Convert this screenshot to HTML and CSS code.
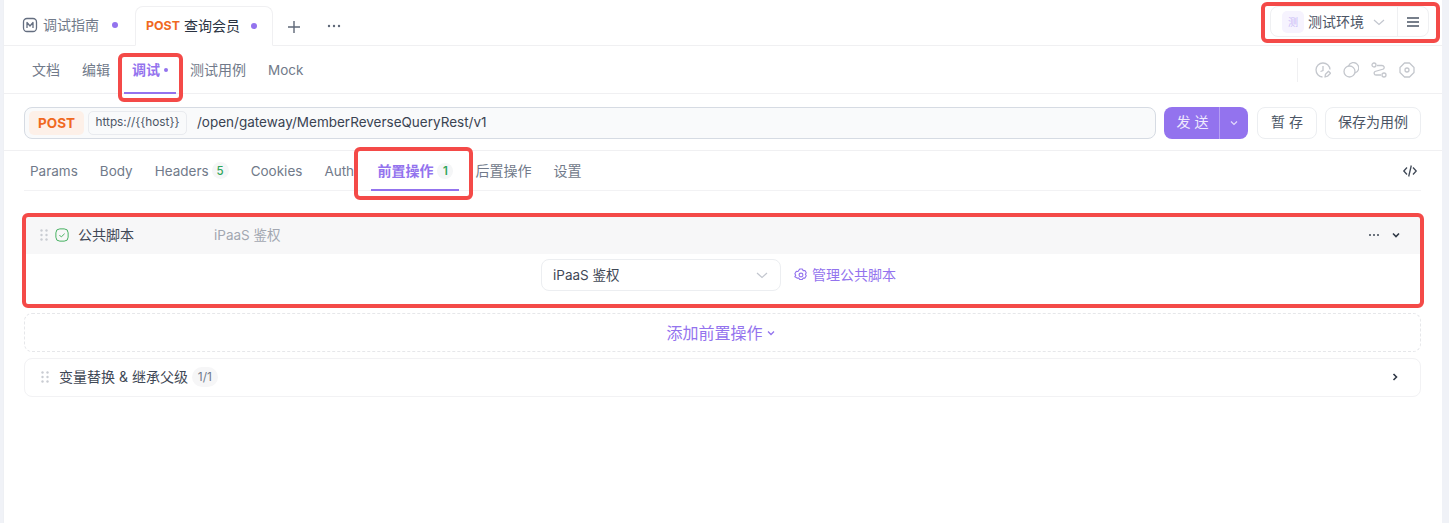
FILE: index.html
```html
<!DOCTYPE html>
<html lang="zh">
<head>
<meta charset="utf-8">
<title>查询会员</title>
<link rel="stylesheet" href="styles.css">
</head>
<body>
<div class="app">
  <header class="tabbar">
    <div class="doc-tab">
      <svg class="i16" viewBox="0 0 16 16" fill="none" stroke="#646e80" stroke-width="1.300"><rect x="1.500" y="1.500" width="13" height="13" rx="3.500"/><path d="M5 11V5.500L8 9l3-3.500V11" stroke-linejoin="round"/></svg>
      <span>调试指南</span><i class="dot"></i>
    </div>
    <div class="req-tab">
      <b>POST</b><span>查询会员</span><i class="dot"></i>
    </div>
    <svg class="plus" viewBox="0 0 12 12" fill="none" stroke="#5f6878" stroke-width="1.400"><path d="M6 0v12M0 6h12"/></svg>
    <svg class="more" viewBox="0 0 16 16" fill="#5f6878"><circle cx="3" cy="8" r="1.200"/><circle cx="8" cy="8" r="1.200"/><circle cx="13" cy="8" r="1.200"/></svg>
    <div class="env">
      <div class="env-main"><span class="env-badge">测</span><span class="env-name">测试环境</span>
        <svg class="chev-l" viewBox="0 0 12 12" fill="none" stroke="#c2c6ce" stroke-width="1.200"><path d="M1 4l5 4.500L11 4"/></svg></div>
      <div class="env-menu"><svg viewBox="0 0 14 14" fill="none" stroke="#4b5565" stroke-width="1.400"><path d="M1 3h12M1 7h12M1 11h12"/></svg></div>
    </div>
  </header>

  <nav class="subtabs">
    <span>文档</span><span>编辑</span><span class="on">调试<em></em></span><span>测试用例</span><span class="latin">Mock</span>
    <div class="tools">
      <svg viewBox="0 0 16 16" fill="none" stroke="#c4c7cd" stroke-width="1.300"><path d="M15 7.500A7 7 0 1 0 7.500 15"/><path d="M8 4v4.500l-2.500 1"/><path d="M10 15l.5-2.800 3-3 2 2-3 3z" stroke-linejoin="round"/></svg>
      <svg viewBox="0 0 16 16" fill="none" stroke="#c4c7cd" stroke-width="1.300"><circle cx="6.500" cy="9.500" r="5.500"/><path d="M5.500 4A5.300 5.300 0 1 1 12 11"/></svg>
      <svg viewBox="0 0 16 16" fill="none" stroke="#c4c7cd" stroke-width="1.300"><circle cx="3" cy="3" r="2"/><circle cx="13" cy="13" r="2"/><path d="M6 3.500h5c2 0 3 2 1.500 3.500L4 9.500c-1.500 1-1 3.500 1 3.500h5"/></svg>
      <svg viewBox="0 0 16 16" fill="none" stroke="#c4c7cd" stroke-width="1.300"><path d="M5.500 1h5l4.500 4.500v5L10.500 15h-5L1 10.500v-5z" stroke-linejoin="round"/><circle cx="8" cy="8" r="2"/></svg>
    </div>
  </nav>

  <section class="urlrow">
    <div class="urlbox">
      <span class="method">POST</span><span class="host">https://{{host}}</span><span class="path">/open/gateway/MemberReverseQueryRest/v1</span>
    </div>
    <div class="send"><span class="send-l">发 送</span><span class="send-r"><svg viewBox="0 0 10 10" fill="none" stroke="#e3dafc" stroke-width="1.200"><path d="M2 3.500l3 3 3-3"/></svg></span></div>
    <button class="btn btn-save">暂 存</button>
    <button class="btn btn-case">保存为用例</button>
  </section>

  <main class="content">
    <nav class="params">
      <span class="latin">Params</span><span class="latin">Body</span><span class="latin">Headers<i class="count">5</i></span><span class="latin">Cookies</span><span class="latin auth">Auth</span>
      <span class="on">前置操作<i class="count">1</i></span><span>后置操作</span><span>设置</span>
      <svg class="code" viewBox="0 0 16 16" fill="none" stroke="#3f4856" stroke-width="1.300"><path d="M5 4.500L1.800 8 5 11.500M11 4.500L14.200 8 11 11.500M9.300 2.500l-2.600 11"/></svg>
    </nav>

    <div class="script-card">
      <div class="script-head">
        <svg class="grip" viewBox="0 0 8 12" fill="#c9ccd2"><circle cx="1.500" cy="1.500" r="1.200"/><circle cx="6.500" cy="1.500" r="1.200"/><circle cx="1.500" cy="6" r="1.200"/><circle cx="6.500" cy="6" r="1.200"/><circle cx="1.500" cy="10.500" r="1.200"/><circle cx="6.500" cy="10.500" r="1.200"/></svg>
        <svg class="check" viewBox="0 0 16 16" fill="none" stroke="#3fae5c" stroke-width="1.100"><rect x="1" y="1" width="14" height="14" rx="4.500"/><path d="M5 8l2.200 2.200L11 6.500"/></svg>
        <span class="script-title">公共脚本</span><span class="script-sub">iPaaS 鉴权</span>
        <svg class="dots" viewBox="0 0 12 4" fill="#3f4856"><circle cx="2" cy="2" r="1"/><circle cx="6" cy="2" r="1"/><circle cx="10" cy="2" r="1"/></svg>
        <svg class="arrow" viewBox="0 0 10 10" fill="none" stroke="#2f3846" stroke-width="1.600"><path d="M2 3.500l3 3 3-3"/></svg>
      </div>
      <div class="script-body">
        <div class="select"><span>iPaaS 鉴权</span><svg viewBox="0 0 12 12" fill="none" stroke="#c2c6ce" stroke-width="1.200"><path d="M1 4l5 4.500L11 4"/></svg></div>
        <a class="manage"><svg viewBox="0 0 16 16" fill="none" stroke="#9373ee" stroke-width="1.300"><path d="M6.500 1.200h3l1 1.800 2-.1 1.500 2.600-1 1.700 1 1.700-1.500 2.600-2-.1-1 1.800h-3l-1-1.800-2 .1L1 9.900l1-1.700-1-1.700 1.500-2.600 2 .1z" stroke-linejoin="round"/><circle cx="8" cy="8" r="2.200"/></svg>管理公共脚本</a>
      </div>
    </div>

    <div class="add">添加前置操作<svg viewBox="0 0 10 10" fill="none" stroke="#9373ee" stroke-width="1.300"><path d="M2 3.500l3 3 3-3"/></svg></div>

    <div class="var-card">
      <svg class="grip" viewBox="0 0 8 12" fill="#c9ccd2"><circle cx="1.500" cy="1.500" r="1.200"/><circle cx="6.500" cy="1.500" r="1.200"/><circle cx="1.500" cy="6" r="1.200"/><circle cx="6.500" cy="6" r="1.200"/><circle cx="1.500" cy="10.500" r="1.200"/><circle cx="6.500" cy="10.500" r="1.200"/></svg>
      <span class="var-title">变量替换 &amp; 继承父级</span><span class="pill">1/1</span>
      <svg class="arrow" viewBox="0 0 10 10" fill="none" stroke="#2f3846" stroke-width="1.600"><path d="M3.500 2l3 3-3 3"/></svg>
    </div>
  </main>
</div>

<div class="mark mark-env"></div>
<div class="mark mark-debug"></div>
<div class="mark mark-pre"></div>
<div class="mark mark-script"></div>
</body>
</html>
```

FILE: styles.css
```css
* { box-sizing: border-box; }
html, body { height: 100%; }
body {
  margin: 0;
  position: relative;
  overflow: hidden;
  background: #f0f2f7;
  font-family: Inter, "Noto Sans CJK SC", sans-serif;
  font-size: 14px;
  line-height: 20px;
  color: #4b5565;
}
svg { display: block; flex: none; }
.latin { font-size: 13.5px; }
.app {
  margin-left: 3px;
  width: 1439px;
  height: 523px;
  background: #fff;
  border-left: 1px solid #eef0f4;
}

/* top tabs */
.tabbar {
  height: 46px;
  display: flex;
  align-items: flex-end;
  border-bottom: 1px solid #f0f0f2;
  position: relative;
}
.doc-tab {
  display: flex;
  align-items: center;
  height: 40px;
  padding-left: 18px;
  width: 131px;
  color: #717a8a;
}
.doc-tab span { margin-left: 5px; }
.doc-tab .dot { margin-left: 13px; }
.i16 { width: 16px; height: 16px; }
.dot { width: 6px; height: 6px; border-radius: 50%; background: #9373ee; display: block; }
.req-tab {
  width: 138px;
  height: 40px;
  margin-bottom: -1px;
  border: 1px solid #f0f0f2;
  border-bottom: 1px solid #fff;
  border-radius: 8px 8px 0 0;
  background: #fff;
  display: flex;
  align-items: center;
  padding-left: 10px;
  color: #2a3241;
}
.req-tab b { font-size: 12.4px; font-weight: 700; color: #f0691f; margin-right: 4px; }
.req-tab .dot { margin-left: 11px; }
.plus { width: 12px; height: 12px; margin: 0 0 12px 15px; }
.more { width: 16px; height: 16px; margin: 0 0 11px 26px; }
.env {
  margin-left: auto;
  margin-right: 13px;
  margin-bottom: 8px;
  width: 159px;
  height: 31px;
  border: 1px solid #eff0f2;
  border-radius: 8px;
  display: flex;
}
.env-main { flex: 1; display: flex; align-items: center; padding-left: 11px; border-right: 1px solid #eff0f2; }
.env-badge {
  width: 22px; height: 22px; border-radius: 5px; background: #f6f3fe; color: #c9bbf6;
  font-size: 10px; display: flex; align-items: center; justify-content: center;
}
.env-name { margin-left: 4px; color: #4b5565; }
.chev-l { width: 12px; height: 12px; margin-left: 9px; }
.env-menu { width: 30px; display: flex; align-items: center; justify-content: center; }
.env-menu svg { width: 14px; height: 14px; }

/* sub tabs */
.subtabs {
  height: 48px;
  display: flex;
  align-items: stretch;
  gap: 22px;
  padding-left: 28px;
  border-bottom: 1px solid #f0f0f2;
  color: #717a8a;
}
.subtabs > span { display: flex; align-items: center; white-space: pre; height: 47px; }
.subtabs .on { color: #9373ee; font-weight: 600; position: relative; }
.subtabs .on em { width: 4px; height: 4px; border-radius: 50%; background: #9373ee; margin-left: 4px; }
.subtabs .on::after {
  content: ""; position: absolute; left: -8px; right: -8px; bottom: -1px; height: 2px; background: #9373ee;
}
.tools {
  margin-left: auto;
  display: flex;
  align-items: center;
  gap: 12px;
  padding-right: 27px;
}
.tools svg { width: 16px; height: 16px; }
.tools::before { content: ""; width: 1px; height: 24px; background: #f0f0f2; margin-right: 5px; }

/* url row */
.urlrow {
  height: 57px;
  display: flex;
  align-items: center;
  padding: 1px 21px 0 20px;
  border-bottom: 1px solid #f0f0f2;
}
.urlbox {
  width: 1132px;
  height: 32px;
  border: 1px solid #d6dbe3;
  border-radius: 8px;
  background: #f9fafb;
  display: flex;
  align-items: center;
  padding-left: 4px;
}
.method {
  width: 55px; height: 24px; border-radius: 5px; background: #fdf0e8; color: #f0691f;
  font-weight: 700; display: flex; align-items: center; justify-content: center; font-size: 13.5px;
}
.host {
  margin-left: 4px; height: 24px; width: 99px; padding-bottom: 1px; justify-content: center; border: 1px solid #e9ebef; border-radius: 5px;
  font-size: 11.8px; display: flex; align-items: center; color: #4b5565; background: #f9fafb; white-space: nowrap;
}
.path { margin-left: 10px; padding-bottom: 2px; color: #3a4352; font-size: 13.5px; }
.send {
  margin-left: 8px;
  width: 84px; height: 32px; border-radius: 8px; background: #9373ee; color: #efeafd;
  display: flex;
}
.send-l { width: 56px; display: flex; align-items: center; justify-content: center; padding: 0 0 2px 2px; border-right: 1px solid #b6a0f4; }
.send-r { flex: 1; display: flex; align-items: center; justify-content: center; }
.send-r svg { width: 10px; height: 10px; }
.btn {
  font: inherit; height: 32px; background: #fff; border: 1px solid #eceef1; border-radius: 8px; color: #4b5565; padding: 0 0 2px;
}
.btn-save { width: 60px; margin-left: 9px; }
.btn-case { width: 96px; margin-left: 8px; }

/* content */
.content { padding: 0 21px 0 20px; }
.params {
  height: 40px;
  display: flex;
  gap: 22px;
  padding-left: 6px;
  border-bottom: 1px solid #f2f2f4;
  color: #717a8a;
  position: relative;
}
.params > span { display: flex; align-items: center; height: 39px; white-space: nowrap; }
.params .auth { width: 31px; overflow: hidden; }
.params .on { color: #9373ee; font-weight: 600; position: relative; }
.params .on::after {
  content: ""; position: absolute; left: -6px; right: -6px; bottom: -1px; height: 2px; background: #9373ee;
}
.count {
  font-style: normal; font-size: 11.5px; font-weight: 500; color: #2fa55a;
  width: 17px; height: 17px; margin-left: 3px; border-radius: 50%; background: #f5f6f7;
  display: flex; align-items: center; justify-content: center;
}
.params .on .count { width: 16px; height: 16px; margin-left: 4px; font-weight: 600; }
.code { width: 16px; height: 16px; margin-left: auto; align-self: center; margin-right: 3px; }

.script-card { margin-top: 25px; height: 91px; }
.script-head {
  height: 38px;
  background: #f7f7f8;
  display: flex;
  align-items: center;
  padding-left: 16px;
  padding-right: 20px;
}
.grip { width: 8px; height: 12px; }
.check { width: 14px; height: 14px; margin-left: 7px; }
.script-title { margin-left: 9px; width: 136px; color: #3f4856; }
.script-sub { color: #a2a7b1; font-size: 13.5px; }
.dots { width: 12px; height: 4px; margin-left: auto; }
.arrow { width: 10px; height: 10px; margin-left: 11px; }
.script-body {
  height: 53px;
  display: flex;
  align-items: flex-start;
  padding: 5px 0 0 517px;
}
.select {
  width: 240px; height: 32px; border: 1px solid #eceef1; border-radius: 8px;
  display: flex; align-items: center; justify-content: space-between;
  padding: 0 12px 0 11px; color: #3f4856; font-size: 13.5px;
}
.select svg { width: 12px; height: 12px; }
.manage { display: flex; align-items: center; height: 32px; margin-left: 13px; color: #9373ee; }
.manage svg { width: 14px; height: 14px; margin-right: 4px; }

.add {
  margin-top: 6px;
  height: 39px;
  padding-right: 3px;
  border: 1px dashed #e6e7ea;
  border-radius: 8px;
  display: flex;
  align-items: center;
  justify-content: center;
  font-size: 16px;
  color: #9373ee;
}
.add svg { width: 10px; height: 10px; margin-left: 3px; }
.var-card {
  margin-top: 6px;
  height: 39px;
  border: 1px solid #f2f2f4;
  border-radius: 8px;
  display: flex;
  align-items: center;
  padding: 0 20px 2px 16px;
}
.var-title { margin-left: 10px; color: #3f4856; }
.pill {
  margin-left: 4px; height: 20px; width: 26px; justify-content: center; border-radius: 10px; background: #f6f6f7;
  color: #717a8a; font-size: 12px; display: flex; align-items: center;
}
.var-card .arrow { margin-left: auto; }

/* annotation overlays */
.mark { position: absolute; border: 4px solid #f44a48; border-radius: 6px; pointer-events: none; }
.mark-env { left: 1261px; top: 2px; width: 179px; height: 41px; }
.mark-debug { left: 118px; top: 53px; width: 65px; height: 49px; }
.mark-pre { left: 354px; top: 147px; width: 119px; height: 53px; }
.mark-script { left: 22px; top: 213px; width: 1402px; height: 95px; }
```
